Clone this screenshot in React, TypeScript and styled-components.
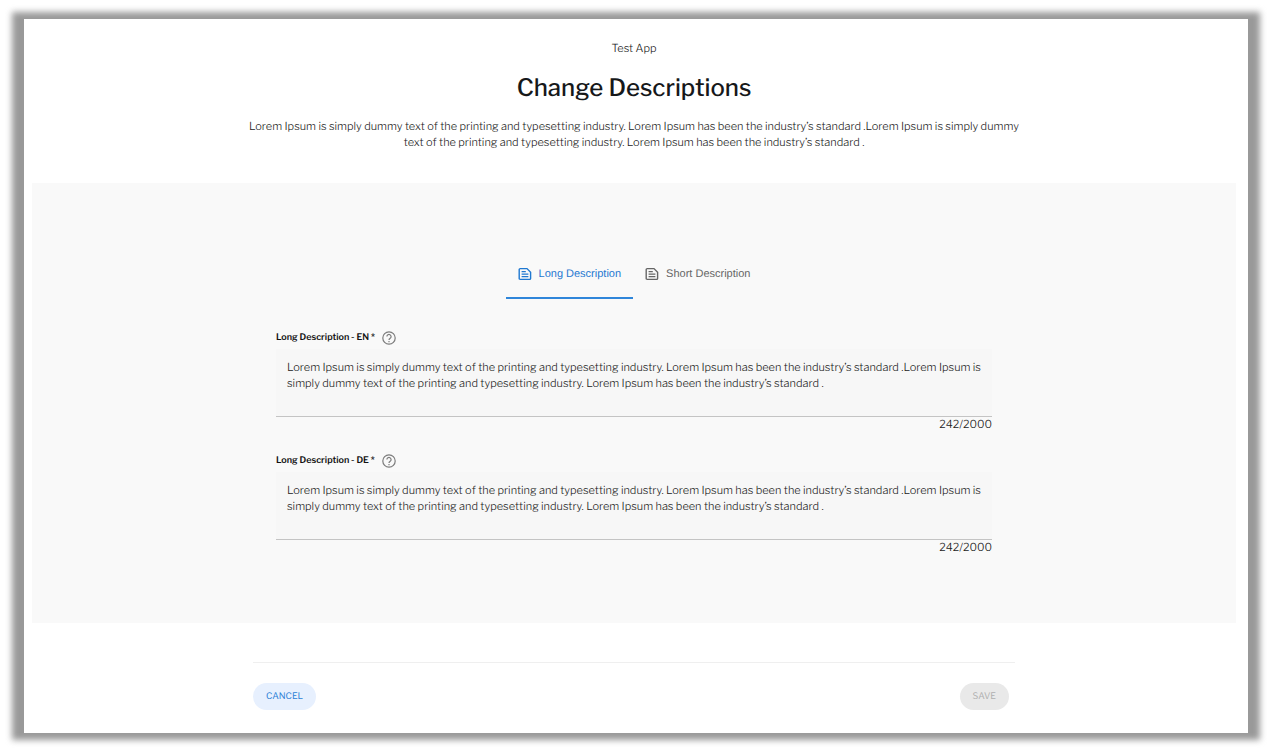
import React, { useState } from "react";
import styled, { createGlobalStyle } from "styled-components";

const GlobalStyle = createGlobalStyle`
  * { box-sizing: border-box; }
  body {
    margin: 0;
    background: #ffffff;
    color: #222222;
    font-family: "Libre Franklin", Inter, "Liberation Sans", sans-serif;
    font-size: 11px;
    font-weight: 300;
    line-height: 16px;
    text-rendering: geometricPrecision;
  }
  button, textarea { font: inherit; text-rendering: inherit; }
`;

const Backdrop = styled.div`
  min-height: 100vh;
  padding: 19px 24px;
  display: flex;
  flex-direction: column;
`;

const Frame = styled.div`
  position: relative;
  isolation: isolate;
  flex: 1;
  display: flex;

  &::before {
    content: "";
    position: absolute;
    inset: -7px -12px;
    z-index: -1;
    background: #999999;
    filter: blur(3px);
  }
`;

const Page = styled.main`
  flex: 1;
  min-width: 0;
  display: flex;
  flex-direction: column;
  padding: 0 12px 0 8px;
  background: #ffffff;
`;

const Header = styled.header`
  display: flex;
  flex-direction: column;
  align-items: center;
  padding: 21px 0 33px;
  text-align: center;
`;

const AppName = styled.span`
  color: #222222;
`;

const Title = styled.h1`
  margin: 16px 0 14px;
  color: #16181a;
  font-size: 24px;
  font-weight: 500;
  line-height: 32px;
`;

const Intro = styled.p`
  max-width: 780px;
  margin: 0;
`;

const Panel = styled.section`
  display: flex;
  flex-direction: column;
  align-items: center;
  padding: 66px 24px 68px;
  background: #f9f9f9;
`;

const Tabs = styled.div`
  display: flex;
`;

const Tab = styled.button<{ $active: boolean }>`
  display: flex;
  align-items: center;
  gap: 7px;
  height: 50px;
  padding: 2px 12px 0;
  border: 0;
  border-bottom: 2px solid ${(p) => (p.$active ? "#2f86da" : "transparent")};
  background: none;
  color: ${(p) => (p.$active ? "#1f78d1" : "#666666")};
  font-family: "Liberation Sans", Arial, sans-serif;
  font-weight: 400;
  white-space: nowrap;
  cursor: pointer;
`;

const Form = styled.form`
  display: flex;
  flex-direction: column;
  gap: 20px;
  width: 100%;
  max-width: 716px;
  margin-top: 30px;
`;

const Field = styled.div`
  display: flex;
  flex-direction: column;
`;

const LabelRow = styled.div`
  display: flex;
  align-items: center;
  gap: 7px;
  height: 18px;
`;

const Label = styled.label`
  color: #111111;
  font-size: 9px;
  font-weight: 600;
`;

const HelpButton = styled.button`
  display: flex;
  padding: 0;
  border: 0;
  background: none;
  color: #7c7c7c;
  cursor: help;
`;

const TextArea = styled.textarea`
  display: block;
  width: 100%;
  height: 68px;
  margin-top: 2px;
  padding: 10px 11px;
  border: 0;
  border-bottom: 1px solid #c4c4c4;
  border-radius: 0;
  outline: 0;
  background: #f7f7f7;
  color: #222222;
  overflow: hidden;
  resize: none;
`;

const Counter = styled.span`
  align-self: flex-end;
  color: #222222;
  line-height: 15px;
`;

const Footer = styled.footer`
  display: flex;
  justify-content: space-between;
  align-self: center;
  width: 100%;
  max-width: 762px;
  margin-top: 39px;
  padding: 20px 6px 20px 0;
  border-top: 1px solid #efefef;
`;

const PillButton = styled.button`
  height: 27px;
  padding: 0 13px;
  border: 0;
  border-radius: 14px;
  background: #e7f0fe;
  color: #2b7fd6;
  font-size: 9px;
  font-weight: 400;
  cursor: pointer;

  &:disabled {
    background: #e9e9e9;
    color: #b0b0b0;
    cursor: default;
  }
`;

const lorem =
  "Lorem Ipsum is simply dummy text of the printing and typesetting industry. Lorem Ipsum has been the industry’s standard .Lorem Ipsum is simply dummy text of the printing and typesetting industry. Lorem Ipsum has been the industry’s standard .";

const NoteIcon = () => (
  <svg width="14" height="14" viewBox="0 0 14 14" fill="none" stroke="currentColor" strokeWidth="1.4" aria-hidden="true">
    <path d="M2.2 1.6h6.8l3.6 3.6v6.2a1 1 0 0 1-1 1H2.2a1 1 0 0 1-1-1V2.6a1 1 0 0 1 1-1z" />
    <path d="M3.6 4.6h4.2M3.6 7.1h6.8M3.6 9.6h6.8" />
  </svg>
);

const HelpIcon = () => (
  <svg width="14" height="14" viewBox="0 0 14 14" fill="none" stroke="currentColor" strokeWidth="1.2" aria-hidden="true">
    <circle cx="7" cy="7" r="6.2" />
    <path d="M4.9 5.6a2.1 2.1 0 1 1 3.3 1.7C7.4 7.9 7 8.2 7 9" />
    <path d="M7 10v1.2" />
  </svg>
);

const tabs = ["Long Description", "Short Description"];
const languages = ["EN", "DE"];

function DescriptionField({ name, lang }: { name: string; lang: string }) {
  const [value, setValue] = useState(lorem);
  const id = `description-${lang}`;
  return (
    <Field>
      <LabelRow>
        <Label htmlFor={id}>{`${name} - ${lang} *`}</Label>
        <HelpButton type="button" aria-label="Help">
          <HelpIcon />
        </HelpButton>
      </LabelRow>
      <TextArea id={id} value={value} spellCheck={false} onChange={(e) => setValue(e.target.value)} />
      <Counter>242/2000</Counter>
    </Field>
  );
}

export default function App() {
  const [active, setActive] = useState(tabs[0]);
  return (
    <>
      <GlobalStyle />
      <Backdrop>
        <Frame>
          <Page>
            <Header>
              <AppName>Test App</AppName>
              <Title>Change Descriptions</Title>
              <Intro>{lorem}</Intro>
            </Header>
            <Panel>
              <Tabs role="tablist">
                {tabs.map((tab) => (
                  <Tab key={tab} type="button" role="tab" aria-selected={tab === active} $active={tab === active} onClick={() => setActive(tab)}>
                    <NoteIcon />
                    {tab}
                  </Tab>
                ))}
              </Tabs>
              <Form id="descriptions">
                {languages.map((lang) => (
                  <DescriptionField key={lang} name={active} lang={lang} />
                ))}
              </Form>
            </Panel>
            <Footer>
              <PillButton type="button">CANCEL</PillButton>
              <PillButton type="submit" form="descriptions" disabled>
                SAVE
              </PillButton>
            </Footer>
          </Page>
        </Frame>
      </Backdrop>
    </>
  );
}
